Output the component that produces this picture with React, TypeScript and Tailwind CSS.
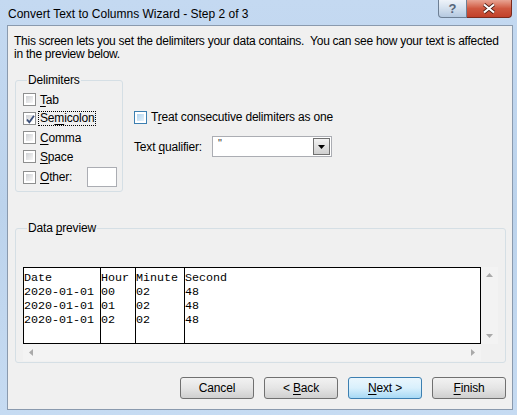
import React from "react";

const ui = { fontFamily: '"Liberation Sans", Arial, sans-serif' };
const mono = { fontFamily: '"Liberation Mono", "Courier New", monospace' };

function CheckBox({ checked = false, hot = false }: { checked?: boolean; hot?: boolean }) {
    return (
        <span
            className={
                "relative flex h-[13px] w-[13px] shrink-0 items-center justify-center border bg-white p-[2px] " +
                (hot ? "border-[#3c7fb1]" : "border-[#8e8f8f]")
            }
        >
            <span
                className={
                    "block h-full w-full bg-gradient-to-br " +
                    (hot ? "from-[#b1d5f0] to-[#e6f2fb]" : "from-[#cfd1d4] to-[#f8f8f8]")
                }
            />
            {checked && (
                <svg className="absolute left-[1px] top-[1px]" width="11" height="11" viewBox="0 0 11 11">
                    <path d="M2 5.5 L4.3 8.3 L9 1.8" fill="none" stroke="#3b4f7a" strokeWidth="1.8" />
                </svg>
            )}
        </span>
    );
}

function Key({ before = "", k, after = "" }: { before?: string; k: string; after?: string }) {
    return (
        <span>
            {before}
            <span className="underline underline-offset-[2px]">{k}</span>
            {after}
        </span>
    );
}

function Btn({ children, primary = false }: { children: React.ReactNode; primary?: boolean }) {
    return (
        <button
            type="button"
            className={
                "flex h-[22px] w-[74px] items-center justify-center rounded-[3px] border text-[12px] text-black " +
                (primary
                    ? "border-[#3c7fb1] bg-gradient-to-b from-[#eaf6fd] via-[#d9f0fc] to-[#a7d9f5]"
                    : "border-[#707070] bg-gradient-to-b from-[#f2f2f2] via-[#e5e5e5] to-[#cfcfcf]")
            }
        >
            {children}
        </button>
    );
}

const rows = [
    ["Date", "Hour", "Minute", "Second"],
    ["2020-01-01", "00", "02", "48"],
    ["2020-01-01", "01", "02", "48"],
    ["2020-01-01", "02", "02", "48"],
];

function Column({ idx, className }: { idx: number; className: string }) {
    return (
        <div className={"h-full pt-[3px] " + className}>
            {rows.map((r, i) => (
                <div key={i} className="h-[14px] whitespace-pre leading-[14px]">
                    {r[idx]}
                </div>
            ))}
        </div>
    );
}

export default function App() {
    return (
        <div
            className="flex h-[415px] w-[517px] flex-col overflow-hidden bg-gradient-to-b from-[#c4d9f1] via-[#bcd3ec] to-[#c6dbf2] text-[12px] tracking-[-0.18px] text-black"
            style={ui}
        >
            {/* title bar */}
            <div className="flex h-[25px] shrink-0 items-start">
                <span className="pl-[8px] pt-[7px] text-[12px] leading-[14px] tracking-normal text-black">
                    Convert Text to Columns Wizard - Step 2 of 3
                </span>
                <div className="ml-auto mr-[5px] flex">
                    <div className="flex h-[18px] w-[29px] items-center justify-center rounded-bl-[4px] border border-t-0 border-[#6d7f94] bg-gradient-to-b from-[#eef3f9] via-[#d3e0ee] to-[#b5c9e0] text-[13px] font-bold leading-none text-[#55657b]">
                        ?
                    </div>
                    <div className="flex h-[18px] w-[45px] items-center justify-center rounded-br-[4px] border border-l-0 border-t-0 border-[#7b2a1d] bg-gradient-to-b from-[#e8a493] via-[#cf5840] to-[#c1402a]">
                        <svg width="14" height="11" viewBox="0 0 14 11">
                            <path d="M2 1.5 L12 9.5 M12 1.5 L2 9.5" stroke="#4a1c14" strokeWidth="3.6" />
                            <path d="M2 1.5 L12 9.5 M12 1.5 L2 9.5" stroke="#ffffff" strokeWidth="2.2" />
                        </svg>
                    </div>
                </div>
            </div>

            {/* client area */}
            <div className="mb-[5px] ml-[7px] mr-[4px] flex flex-1 flex-col border border-[#8a9aae] bg-[#f0f0f0]">
                <p className="pl-[6px] pr-[2px] pt-[9px] leading-[13px] tracking-[-0.26px]">
                    This screen lets you set the delimiters your data contains.&nbsp; You can see how your text is affected in the preview below.
                </p>

                <div className="mt-[12px] flex">
                    <fieldset className="ml-[7px] h-[119px] w-[108px] rounded-[3px] border border-[#d5dfe5] pl-[7px] pt-[3px]">
                        <legend className="ml-[4px] px-[1px] leading-[14px]">Delimiters</legend>
                        <div className="flex h-[19px] items-center gap-[4px]">
                            <CheckBox />
                            <Key k="T" after="ab" />
                        </div>
                        <div className="flex h-[19px] items-center gap-[2px]">
                            <CheckBox checked />
                            <span className="border border-dotted border-black px-[1px] leading-[13px]">
                                <Key before="Se" k="m" after="icolon" />
                            </span>
                        </div>
                        <div className="flex h-[19px] items-center gap-[4px]">
                            <CheckBox />
                            <Key k="C" after="omma" />
                        </div>
                        <div className="flex h-[19px] items-center gap-[4px]">
                            <CheckBox />
                            <Key k="S" after="pace" />
                        </div>
                        <div className="flex h-[22px] items-center gap-[4px]">
                            <CheckBox />
                            <Key k="O" after="ther:" />
                            <div className="ml-[11px] h-[20px] w-[30px] border border-[#abadb3] bg-white" />
                        </div>
                    </fieldset>

                    <div className="ml-[11px] flex flex-col pt-[37px]">
                        <div className="flex h-[14px] items-center gap-[4px]">
                            <CheckBox hot />
                            <Key before="T" k="r" after="eat consecutive delimiters as one" />
                        </div>
                        <div className="mt-[12px] flex items-center">
                            <span className="w-[78px]">
                                <Key before="Text " k="q" after="ualifier:" />
                            </span>
                            <div className="flex h-[21px] w-[120px] border border-[#abadb3] bg-white">
                                <span className="flex-1 pl-[5px] text-[11px] leading-[12px] text-[#333]">"</span>
                                <div className="m-[1px] flex w-[17px] items-center justify-center border border-[#707070] bg-gradient-to-b from-[#f2f2f2] to-[#cfcfcf]">
                                    <svg width="7" height="4" viewBox="0 0 7 4">
                                        <path d="M0 0 H7 L3.5 4 Z" fill="#000" />
                                    </svg>
                                </div>
                            </div>
                        </div>
                    </div>
                </div>

                <fieldset className="ml-[7px] mr-[6px] mt-[29px] h-[142px] rounded-[3px] border border-[#d5dfe5] pl-[7px] pt-[32px]">
                    <legend className="ml-[4px] px-[1px] leading-[14px]">
                        <Key before="Data " k="p" after="review" />
                    </legend>
                    <div className="flex">
                        <div className="flex h-[77px] w-[458px] border border-black bg-white text-[11.7px] tracking-normal text-black" style={mono}>
                            <Column idx={0} className="w-[77px] border-r border-black" />
                            <Column idx={1} className="w-[35px] border-r border-black" />
                            <Column idx={2} className="w-[49px] border-r border-black" />
                            <Column idx={3} className="flex-1" />
                        </div>
                        <div className="flex h-[77px] w-[17px] flex-col items-center justify-between bg-[#f3f3f3] py-[6px]">
                            <svg width="7" height="4" viewBox="0 0 7 4">
                                <path d="M0 4 H7 L3.5 0 Z" fill="#a9a9a9" />
                            </svg>
                            <svg width="7" height="4" viewBox="0 0 7 4">
                                <path d="M0 0 H7 L3.5 4 Z" fill="#a9a9a9" />
                            </svg>
                        </div>
                    </div>
                    <div className="flex h-[17px] w-[458px] items-center justify-between bg-[#f3f3f3] px-[6px]">
                        <svg width="4" height="7" viewBox="0 0 4 7">
                            <path d="M4 0 V7 L0 3.5 Z" fill="#a9a9a9" />
                        </svg>
                        <svg width="4" height="7" viewBox="0 0 4 7">
                            <path d="M0 0 V7 L4 3.5 Z" fill="#a9a9a9" />
                        </svg>
                    </div>
                </fieldset>

                <div className="mr-[6px] mt-[14px] flex justify-end gap-[10px]">
                    <Btn>Cancel</Btn>
                    <Btn>
                        <Key before="< " k="B" after="ack" />
                    </Btn>
                    <Btn primary>
                        <Key k="N" after="ext >" />
                    </Btn>
                    <Btn>
                        <Key k="F" after="inish" />
                    </Btn>
                </div>
            </div>
        </div>
    );
}
